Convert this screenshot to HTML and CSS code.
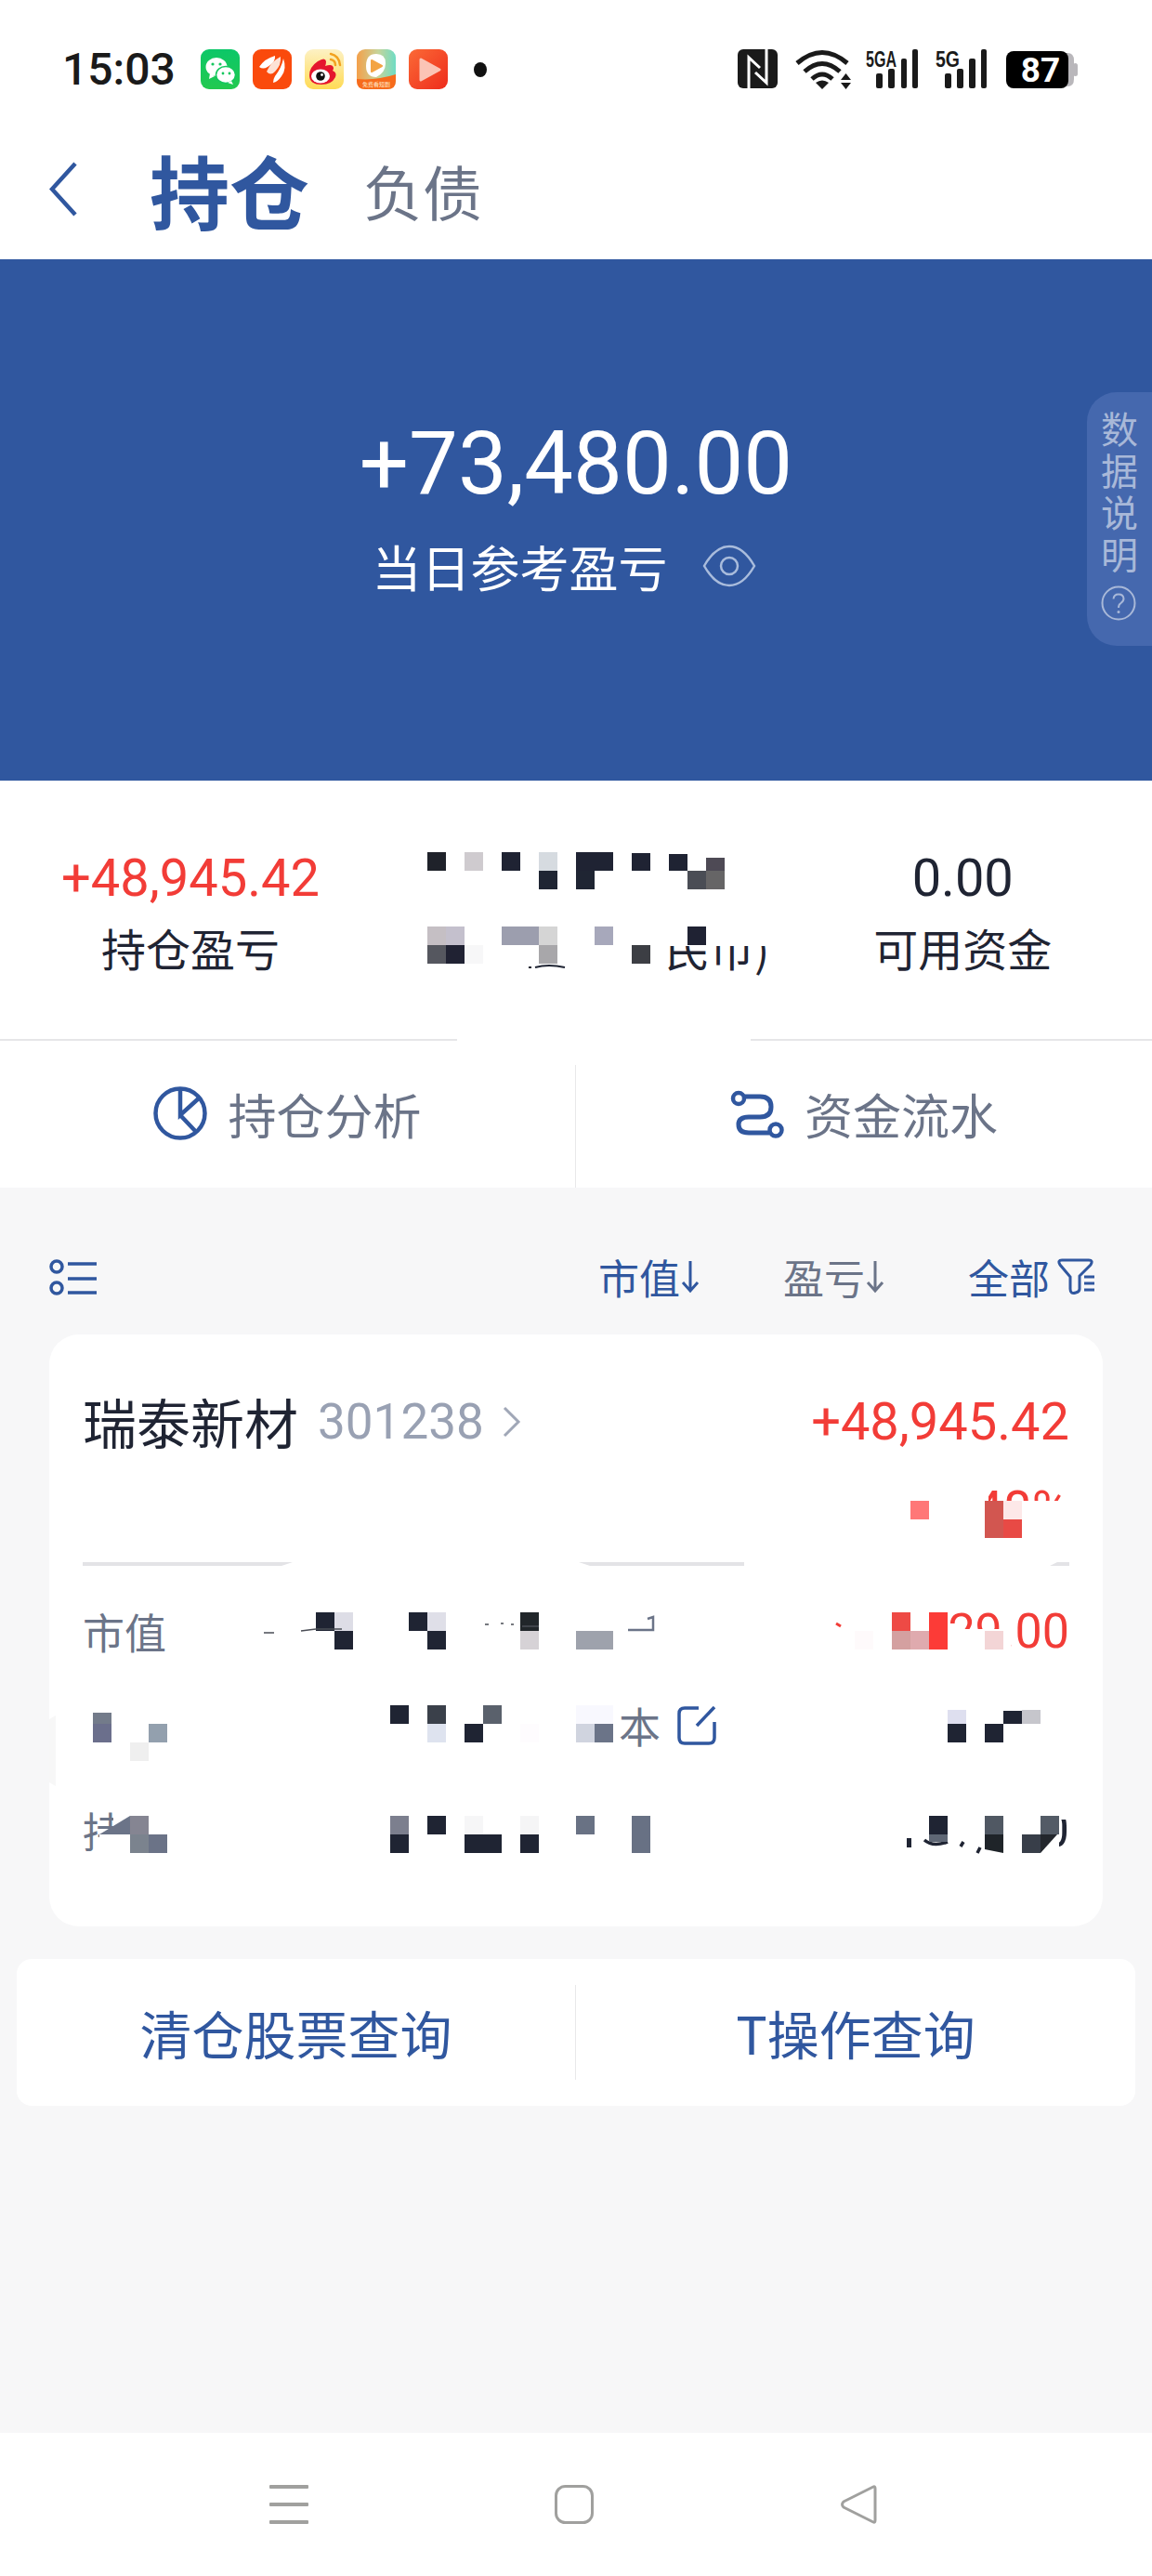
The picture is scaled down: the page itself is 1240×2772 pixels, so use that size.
FILE: index.html
```html
<!DOCTYPE html>
<html lang="zh-CN">
<head>
<meta charset="utf-8">
<title>持仓</title>
<link rel="stylesheet" href="styles.css">
</head>
<body>
<div class="page">
  <header class="status">
    <span class="time">15:03</span>
    <div class="apps">
      <svg class="app" viewBox="0 0 42 43"><defs><linearGradient id="wx" x1="0" y1="0" x2="0" y2="1"><stop offset="0" stop-color="#0cc768"/><stop offset="1" stop-color="#22c94f"/></linearGradient></defs><rect width="42" height="43" rx="9" fill="url(#wx)"/><ellipse cx="17" cy="19" rx="11.5" ry="10" fill="#fff"/><path d="M10 26l-1 6 6-3z" fill="#fff"/><ellipse cx="27" cy="27.5" rx="10.5" ry="9" fill="#fff" stroke="#14c75e" stroke-width="1.5"/><path d="M33 34l2 4-6-2z" fill="#fff"/><circle cx="13" cy="16" r="1.6" fill="#14c75e"/><circle cx="21" cy="16" r="1.6" fill="#14c75e"/><circle cx="24" cy="26" r="1.4" fill="#14c75e"/><circle cx="31" cy="26" r="1.4" fill="#14c75e"/></svg>
      <svg class="app" viewBox="0 0 42 43"><rect width="42" height="43" rx="9" fill="#fa4a0c"/><path d="M7 19Q13 10 24 7Q25 14 16 19Q11 22 7 19Z" fill="#fff"/><path d="M15 24Q20 13 30 8Q31 17 24 24Q19 29 15 24Z" fill="#fde2d6"/><path d="M24 29Q31 20 33 10Q37 21 31 29Q27 35 22 36Q22 32 24 29Z" fill="#fff"/></svg>
      <svg class="app" viewBox="0 0 42 43"><defs><linearGradient id="wb" x1="0" y1="0" x2="0" y2="1"><stop offset="0" stop-color="#fdf1c4"/><stop offset="1" stop-color="#ffdb55"/></linearGradient></defs><rect width="42" height="43" rx="9" fill="url(#wb)"/><path d="M28 5Q37 7 38 17M28 11Q33 12 33 17" fill="none" stroke="#f2a21f" stroke-width="2.5" stroke-linecap="round"/><path d="M5 28Q5 19 14 13Q22 8 23 13Q23 16 22 18Q30 15 31 20Q31 22 30 23Q35 25 33 30Q29 38 18 38Q5 38 5 28Z" fill="#e5162d"/><ellipse cx="17" cy="29" rx="10" ry="7.5" fill="#fff"/><circle cx="17" cy="29" r="4.8" fill="#111"/><circle cx="18.5" cy="27.5" r="1.4" fill="#fff"/></svg>
      <svg class="app" viewBox="0 0 42 43"><defs><linearGradient id="vd" x1="0" y1="0" x2="1" y2="0"><stop offset="0" stop-color="#f4a04a"/><stop offset="0.55" stop-color="#c6d49a"/><stop offset="1" stop-color="#6edcc4"/></linearGradient></defs><rect width="42" height="43" rx="9" fill="url(#vd)"/><path d="M0 32Q20 34 42 27V34Q42 43 33 43H9Q0 43 0 34Z" fill="#f76b1c"/><path d="M21 5Q31 5 31 15T21 30Q10 30 10 18Q10 5 21 5Z" fill="#fff"/><path d="M16 12L27 18L16 24Z" fill="#f3a443" stroke="#f3a443" stroke-width="2" stroke-linejoin="round"/><text class="tiny" x="21" y="40" text-anchor="middle">免费看短剧</text></svg>
      <svg class="app" viewBox="0 0 42 43"><defs><linearGradient id="pl" x1="0" y1="0" x2="1" y2="1"><stop offset="0" stop-color="#fb6a36"/><stop offset="1" stop-color="#ee2c1c"/></linearGradient></defs><rect width="42" height="43" rx="9" fill="url(#pl)"/><path d="M13 11L33 22L13 33Z" fill="#fbc4b6" stroke="#fbc4b6" stroke-width="3" stroke-linejoin="round"/></svg>
      <span class="dot"></span>
    </div>
    <div class="sys">
      <svg class="nfc" viewBox="0 0 43 42"><rect width="43" height="42" rx="6" fill="#1a1a1a"/><path d="M12 42V9L24 20M31 0V36L19 25" fill="none" stroke="#fff" stroke-width="3"/></svg>
      <svg class="wifi" viewBox="0 0 60 43"><path d="M2 15Q29 -8 56 15M10 24Q29 7 48 24M18 32Q29 22 40 32" fill="none" stroke="#1a1a1a" stroke-width="5"/><path d="M22 36Q29 31 36 36L29 43Z" fill="#1a1a1a"/><path d="M54.500 26L60 33H49ZM49 36H60L54.500 43Z" fill="#1a1a1a"/></svg>
      <svg class="sig5a" viewBox="0 -10 56 53"><text class="sigtxt" x="0" y="19" textLength="33" lengthAdjust="spacingAndGlyphs">5GA</text><rect x="11" y="26" width="7" height="16" rx="2"/><rect x="24" y="21" width="7" height="21" rx="2"/><rect x="38" y="10" width="6" height="32" rx="2"/><rect x="50" y="0" width="6" height="42" rx="2"/></svg>
      <svg class="sig5" viewBox="0 -10 55 53"><text class="sigtxt" x="0" y="19" textLength="26" lengthAdjust="spacingAndGlyphs">5G</text><rect x="10" y="26" width="7" height="16" rx="2"/><rect x="23" y="21" width="7" height="21" rx="2"/><rect x="36" y="10" width="7" height="32" rx="2"/><rect x="49" y="0" width="6" height="42" rx="2"/></svg>
      <svg class="batt" viewBox="0 -6 77 54"><path d="M60 2H66Q73 2 73 10V30Q73 38 66 38H60Z" fill="#b9b7bb"/><rect x="72" y="13" width="5" height="14" rx="2.500" fill="#b9b7bb"/><rect width="67" height="40" rx="8" fill="#000"/><text class="batxt" x="37" y="33" text-anchor="middle">87</text></svg>
    </div>
  </header>

  <nav class="topbar">
    <svg class="back" viewBox="0 0 31 59"><path d="M28 2L3 29.500L28 57" fill="none" stroke="#30579f" stroke-width="4.500"/></svg>
    <span class="title">持仓</span>
    <span class="title-sub">负债</span>
  </nav>

  <section class="hero">
    <div class="hero-amount">+73,480.00</div>
    <div class="hero-label">
      <span>当日参考盈亏</span>
      <svg class="eye" viewBox="0 0 58 46"><path d="M2 23Q14 2 29 2T56 23Q44 44 29 44T2 23Z" fill="none" stroke="#a9bcdc" stroke-width="2.500"/><circle cx="29" cy="23" r="9" fill="none" stroke="#a9bcdc" stroke-width="2.500"/></svg>
    </div>
    <aside class="side-tab">
      <span class="side-text">数据说明</span>
      <svg class="side-q" viewBox="0 0 38 38"><circle cx="19" cy="19" r="17.500" fill="none" stroke="#a8b8d8" stroke-width="2"/><path d="M13.500 14.500Q14 9.500 19 9.500T24.500 14Q24.500 17 21.500 19Q19 20.500 19 24" fill="none" stroke="#a8b8d8" stroke-width="2"/><circle cx="19" cy="28.500" r="1.500" fill="#a8b8d8"/></svg>
    </aside>
  </section>

  <section class="stats">
    <div class="stat">
      <div class="stat-val red">+48,945.42</div>
      <div class="stat-lab">持仓盈亏</div>
    </div>
    <div class="stat stat-mid">
      <div class="stat-val">&nbsp;</div>
      <div class="stat-lab">民币)</div>
    </div>
    <div class="stat">
      <div class="stat-val">0.00</div>
      <div class="stat-lab">可用资金</div>
    </div>
  </section>

  <section class="tabs">
    <div class="tab">
      <svg class="tab-ic" viewBox="0 0 58 58"><circle cx="29" cy="29" r="26.500" fill="none" stroke="#30579f" stroke-width="4.500"/><path d="M29 3V31L51 11M29 31L47 50" fill="none" stroke="#30579f" stroke-width="4.500"/></svg>
      <span>持仓分析</span>
    </div>
    <div class="tab tab-r">
      <svg class="tab-ic2" viewBox="0 0 58 54"><circle cx="9" cy="11" r="6" fill="none" stroke="#30579f" stroke-width="4.500"/><circle cx="49" cy="45" r="6.500" fill="none" stroke="#30579f" stroke-width="4.500"/><path d="M15 9H32Q44 9 44 20Q44 31 32 31H20Q9 31 9 39Q9 48 20 48H42" fill="none" stroke="#30579f" stroke-width="5"/></svg>
      <span>资金流水</span>
    </div>
  </section>

  <main class="main">
    <div class="toolbar">
      <svg class="list-ic" viewBox="0 0 51 40"><circle cx="8" cy="8" r="6" fill="none" stroke="#30579f" stroke-width="3.500"/><circle cx="8" cy="31" r="6" fill="none" stroke="#30579f" stroke-width="3.500"/><path d="M20 5H51M20 21H51M20 36H51" stroke="#30579f" stroke-width="3.500"/></svg>
      <div class="sorts">
        <span class="sort blue">市值<svg class="arrow" viewBox="0 0 20 36"><path d="M10 1V33M2 24L10 33L18 24" fill="none" stroke="currentColor" stroke-width="3"/></svg></span>
        <span class="sort">盈亏<svg class="arrow" viewBox="0 0 20 36"><path d="M10 1V33M2 24L10 33L18 24" fill="none" stroke="currentColor" stroke-width="3"/></svg></span>
        <span class="sort blue">全部<svg class="filter" viewBox="0 0 40 40"><path d="M5 2H34Q39 2 36 7L24 19V33Q24 36 20 37Q14 39 14 33V20L3 7Q0 2 5 2Z" fill="none" stroke="#30579f" stroke-width="3"/><path d="M29 20H40M29 27H40M29 34H40" stroke="#30579f" stroke-width="3"/></svg></span>
      </div>
    </div>

    <article class="card">
      <div class="card-head">
        <span class="stock-name">瑞泰新材</span>
        <span class="stock-code">301238</span>
        <svg class="chev" viewBox="0 0 20 34"><path d="M2 2L17 17L2 32" fill="none" stroke="#a0a7b7" stroke-width="3"/></svg>
        <span class="head-val red">+48,945.42</span>
      </div>
      <div class="pct-row red">48%</div>
      <div class="sep"></div>
      <div class="rows">
        <span class="k">市值</span><span class="m"></span><span class="v red">29.00</span>
        <span class="k"></span><span class="m"><span class="k k-end">本</span><svg class="edit" viewBox="0 0 42 42"><path d="M23 2H8Q2 2 2 8V34Q2 40 8 40H34Q40 40 40 34V17M21 21L40 1" fill="none" stroke="#30579f" stroke-width="3.500"/></svg></span><span class="v"></span>
        <span class="k k-last">持</span><span class="m k-last"></span><span class="v k-last">0</span>
      </div>
    </article>

    <div class="queries">
      <div class="query">清仓股票查询</div>
      <div class="query query-r">T操作查询</div>
    </div>
  </main>

  <footer class="navbar">
    <svg class="nav-menu" viewBox="0 0 42 42"><rect y="0" width="42" height="4" rx="1" fill="#a0a09e"/><rect y="19" width="42" height="4" rx="1" fill="#a0a09e"/><rect y="38" width="42" height="4" rx="1" fill="#a0a09e"/></svg>
    <svg class="nav-home" viewBox="0 0 42 42"><rect x="1.500" y="1.500" width="39" height="39" rx="10" fill="none" stroke="#a0a09e" stroke-width="3"/></svg>
    <svg class="nav-back" viewBox="0 0 40 42"><path d="M36 2Q38 1 38 4V38Q38 41 36 40L4 24Q1 21 4 18Z" fill="none" stroke="#a0a09e" stroke-width="3" stroke-linejoin="round"/></svg>
  </footer>

  <svg class="mosaic" viewBox="0 0 1240 2772">
    <g fill="#fff">
      <rect x="492" y="1117" width="316" height="4"/>
      <rect x="700" y="985" width="130" height="33"/>
      <polygon points="318,1680 620,1680 638,1686 300,1686"/>
      <polygon points="801,1680 1140,1680 1128,1686 801,1686"/>
      <rect x="960" y="1615" width="195" height="45"/>
      <rect x="1000" y="1590" width="64" height="26"/>
      <rect x="1000" y="1753" width="88" height="30"/>
      <rect x="1118" y="1945" width="22" height="50"/>
      <rect x="1118" y="1945" width="36" height="13"/>
      <rect x="107" y="1974" width="30" height="26"/>
      <polygon points="122,1940 140,1940 140,1954 122,1965"/>
    </g>
    <polygon points="53,1850 60,1846 60,1922 53,1918" fill="#f7f7f7"/>
    <path d="M107 1974L140 1954V1974Z" fill="#6b7488"/>

    <rect x="460" y="917" width="20" height="20" fill="#1f222a"/>
    <rect x="500" y="917" width="20" height="20" fill="#cfcbcf"/>
    <rect x="540" y="917" width="20" height="20" fill="#1f2333"/>
    <rect x="580" y="917" width="20" height="20" fill="#d6dbe0"/>
    <rect x="580" y="937" width="20" height="20" fill="#1f2533"/>
    <rect x="620" y="917" width="40" height="20" fill="#1f2333"/>
    <rect x="620" y="937" width="20" height="20" fill="#1f2533"/>
    <rect x="680" y="918" width="20" height="19" fill="#1f2333"/>
    <rect x="720" y="919" width="20" height="18" fill="#1f2333"/>
    <rect x="740" y="937" width="20" height="20" fill="#4a4d55"/>
    <rect x="760" y="923" width="20" height="14" fill="#4e4a55"/>
    <rect x="760" y="937" width="20" height="20" fill="#666566"/>

    <rect x="460" y="997" width="20" height="20" fill="#c5bfc4"/>
    <rect x="480" y="997" width="20" height="20" fill="#c4c0cd"/>
    <rect x="540" y="997" width="40" height="20" fill="#9c9eae"/>
    <rect x="580" y="997" width="20" height="20" fill="#d5d5d5"/>
    <rect x="460" y="1017" width="20" height="20" fill="#55575f"/>
    <rect x="480" y="1017" width="20" height="20" fill="#202233"/>
    <rect x="500" y="1017" width="20" height="20" fill="#f7f7f8"/>
    <rect x="580" y="1017" width="20" height="20" fill="#a8a7aa"/>
    <rect x="640" y="997" width="20" height="20" fill="#a7a8bb"/>
    <rect x="680" y="1017" width="20" height="20" fill="#3c3e44"/>
    <rect x="740" y="997" width="20" height="20" fill="#1f2233"/>
    <path d="M569 1041h3M576 1041Q590 1037 608 1041" fill="none" stroke="#1f2433" stroke-width="2"/>

    <rect x="980" y="1615" width="20" height="20" fill="#ff7777"/>
    <rect x="1060" y="1615" width="20" height="40" fill="#d25650"/>
    <rect x="1080" y="1615" width="20" height="20" fill="#fde8e8"/>
    <rect x="1080" y="1635" width="20" height="20" fill="#e84a45"/>

    <rect x="340" y="1735" width="20" height="20" fill="#1f2433"/>
    <rect x="360" y="1735" width="20" height="20" fill="#dddde6"/>
    <rect x="360" y="1755" width="20" height="20" fill="#1f2433"/>
    <rect x="440" y="1735" width="20" height="20" fill="#1f2433"/>
    <rect x="460" y="1735" width="20" height="20" fill="#dfdfe8"/>
    <rect x="460" y="1755" width="20" height="20" fill="#1f2433"/>
    <rect x="560" y="1735" width="20" height="20" fill="#21262a"/>
    <rect x="560" y="1755" width="20" height="20" fill="#d6d2d6"/>
    <path d="M284 1757H295M324 1755L340 1753M340 1753H368M522 1748h4M539 1747h3M550 1748h3M562 1750H580" fill="none" stroke="#4a4d55" stroke-width="1.500"/>
    <rect x="620" y="1755" width="40" height="20" fill="#9ea2ac"/>
    <path d="M676 1754H703V1740L697 1742" fill="none" stroke="#6b7488" stroke-width="2.500"/>
    <rect x="920" y="1755" width="20" height="20" fill="#fefafb"/>
    <path d="M900 1747l5 3" stroke="#f23c37" stroke-width="3"/>
    <rect x="960" y="1735" width="20" height="20" fill="#ee4a45"/>
    <rect x="960" y="1755" width="20" height="20" fill="#d4a0a0"/>
    <rect x="980" y="1755" width="20" height="20" fill="#dfaaae"/>
    <rect x="1000" y="1735" width="20" height="40" fill="#fc3b37"/>
    <rect x="1060" y="1755" width="20" height="20" fill="#f3d5d6"/>

    <rect x="100" y="1843" width="20" height="12" fill="#737b8a"/>
    <rect x="100" y="1855" width="20" height="20" fill="#6b6f8c"/>
    <rect x="160" y="1855" width="20" height="20" fill="#93a0ae"/>
    <rect x="140" y="1875" width="20" height="20" fill="#efefef"/>
    <rect x="420" y="1835" width="20" height="20" fill="#1f2433"/>
    <rect x="460" y="1835" width="20" height="20" fill="#3a404a"/>
    <rect x="460" y="1855" width="20" height="20" fill="#dee3ef"/>
    <rect x="520" y="1835" width="20" height="20" fill="#5a616c"/>
    <rect x="500" y="1855" width="20" height="20" fill="#1f2433"/>
    <rect x="560" y="1855" width="20" height="20" fill="#fefcfe"/>
    <rect x="620" y="1835" width="40" height="20" fill="#f8f8fe"/>
    <rect x="620" y="1855" width="20" height="20" fill="#d0d4df"/>
    <rect x="640" y="1855" width="20" height="20" fill="#6b7488"/>
    <rect x="1020" y="1840" width="20" height="15" fill="#dedfef"/>
    <rect x="1020" y="1855" width="20" height="20" fill="#1f2433"/>
    <rect x="1060" y="1855" width="20" height="20" fill="#1f2433"/>
    <rect x="1080" y="1841" width="20" height="14" fill="#1f2433"/>
    <rect x="1100" y="1840" width="20" height="15" fill="#c6c6cc"/>

    <rect x="140" y="1954" width="20" height="20" fill="#858592"/>
    <rect x="140" y="1974" width="20" height="20" fill="#7b838e"/>
    <rect x="160" y="1974" width="20" height="20" fill="#6b7387"/>
    <rect x="420" y="1954" width="20" height="20" fill="#7c7f8e"/>
    <rect x="420" y="1974" width="20" height="20" fill="#1f2433"/>
    <rect x="460" y="1954" width="20" height="20" fill="#1f2433"/>
    <rect x="500" y="1954" width="20" height="20" fill="#f6f6f7"/>
    <rect x="500" y="1974" width="40" height="20" fill="#1f2433"/>
    <rect x="560" y="1954" width="20" height="20" fill="#f5f5f6"/>
    <rect x="560" y="1974" width="20" height="20" fill="#1f2433"/>
    <rect x="620" y="1954" width="20" height="20" fill="#697284"/>
    <rect x="680" y="1954" width="20" height="40" fill="#687184"/>
    <rect x="976" y="1978" width="5" height="10" fill="#1f2433"/>
    <path d="M995 1980Q1004 1988 1020 1982" fill="none" stroke="#1f2433" stroke-width="3.500"/>
    <rect x="1000" y="1954" width="20" height="20" fill="#1f2433"/>
    <rect x="1000" y="1974" width="20" height="8" fill="#5f6775"/>
    <path d="M1034 1987l3-5M1052 1994l3-6" stroke="#1f2433" stroke-width="3.500"/>
    <rect x="1060" y="1954" width="20" height="20" fill="#505863"/>
    <path d="M1060 1974H1080V1994L1060 1990Z" fill="#1f2429"/>
    <rect x="1100" y="1974" width="20" height="20" fill="#383e49"/>
    <rect x="1120" y="1954" width="20" height="20" fill="#535b66"/>
    <path d="M1120 1974H1138L1120 1994Z" fill="#23272d"/>
  </svg>
</div>
</body>
</html>
```

FILE: styles.css
```css
* { box-sizing: border-box; }
html, body { margin: 0; padding: 0; }
body {
  background: #fff;
  font-family: Roboto, "Noto Sans CJK SC", sans-serif;
  color: #1f2433;
}
.page {
  position: relative;
  width: 1240px;
  height: 2772px;
  display: flex;
  flex-direction: column;
  overflow: hidden;
}
.red { color: #f23c37; }
.blue { color: #30579f; }

/* status bar */
.status {
  height: 140px;
  padding: 53px 0 0 67px;
  display: flex;
  align-items: flex-start;
}
.time {
  width: 149px;
  font-size: 48px;
  font-weight: 500;
  line-height: 43px;
  color: #1a1a1a;
}
.apps { display: flex; align-items: center; gap: 14px; height: 43px; }
.app { width: 42px; height: 43px; display: block; }
.tiny { font-family: "Noto Sans CJK SC", sans-serif; font-size: 6px; fill: #ffe9c9; }
.dot {
  width: 14px;
  height: 16px;
  margin-left: 14px;
  border-radius: 50%;
  background: #111;
}
.sys {
  position: relative;
  margin-left: 270px;
  display: flex;
  align-items: flex-start;
  height: 43px;
}
.nfc { width: 43px; height: 42px; margin-right: 19px; display: block; }
.wifi { width: 60px; height: 43px; margin-right: 16px; display: block; }
.sig5a { width: 56px; height: 53px; margin: -10px 19px 0 0; display: block; fill: #1a1a1a; }
.sig5 { width: 55px; height: 53px; margin: -10px 21px 0 0; display: block; fill: #1a1a1a; }
.sigtxt { font-family: "Liberation Sans", sans-serif; font-size: 23px; font-weight: 700; fill: #1a1a1a; }
.batt { width: 77px; height: 54px; margin-top: -4px; display: block; }
.batxt { font-family: Roboto, sans-serif; font-size: 37px; font-weight: 700; fill: #fff; }

/* top bar */
.topbar {
  height: 139px;
  padding: 0 0 12px 53px;
  display: flex;
  align-items: center;
}
.back { width: 31px; height: 59px; margin-right: 77px; display: block; }
.title {
  font-family: "Noto Sans CJK SC", sans-serif;
  font-size: 86px;
  font-weight: 700;
  line-height: 96px;
  color: #30579f;
}
.title-sub {
  margin-left: 58px;
  font-family: "Noto Sans CJK SC", sans-serif;
  font-size: 64px;
  line-height: 72px;
  color: #6b7488;
}

/* hero */
.hero {
  position: relative;
  height: 561px;
  padding-top: 170px;
  background: #30579f;
  color: #fff;
  text-align: center;
}
.hero-amount { font-size: 94px; line-height: 100px; }
.hero-label {
  margin-top: 28px;
  padding-right: 26px;
  display: flex;
  justify-content: center;
  align-items: center;
  gap: 37px;
  font-family: "Noto Sans CJK SC", sans-serif;
  font-size: 53px;
  line-height: 64px;
}
.eye { width: 58px; height: 46px; display: block; }
.side-tab {
  position: absolute;
  right: 0;
  top: 143px;
  width: 70px;
  height: 273px;
  padding: 20px 0 0 15px;
  background: #4568ae;
  border-radius: 32px 0 0 32px;
}
.side-text {
  display: block;
  width: 40px;
  writing-mode: vertical-rl;
  font-family: "Noto Sans CJK SC", sans-serif;
  font-size: 40px;
  line-height: 40px;
  letter-spacing: 5px;
  color: #a8b8d8;
}
.side-q { width: 38px; height: 38px; margin-top: 8px; display: block; }

/* stats */
.stats {
  height: 280px;
  padding-top: 75px;
  display: grid;
  grid-template-columns: 410px 1fr 416px;
  border-bottom: 2px solid #e6e6e8;
  text-align: center;
}
.stat-val { font-size: 56px; line-height: 60px; }
.stat-lab {
  margin-top: 14px;
  font-family: "Noto Sans CJK SC", sans-serif;
  font-size: 48px;
  line-height: 60px;
  color: #1f2433;
}
.stat-mid { padding-left: 306px; text-align: left; white-space: nowrap; }

/* tabs */
.tabs {
  height: 158px;
  padding-top: 26px;
  display: grid;
  grid-template-columns: 619px 1fr;
}
.tab {
  height: 132px;
  padding-bottom: 28px;
  display: flex;
  justify-content: center;
  align-items: center;
  gap: 22px;
  font-family: "Noto Sans CJK SC", sans-serif;
  font-size: 52px;
  color: #6b7488;
}
.tab-r { border-left: 1px solid #e8e8ea; }
.tab-ic { width: 58px; height: 58px; display: block; }
.tab-ic2 { width: 58px; height: 54px; display: block; }

/* main */
.main {
  flex: 1;
  padding-top: 77px;
  background: #f7f7f8;
}
.toolbar {
  height: 40px;
  margin-bottom: 41px;
  padding: 0 62px 0 53px;
  display: flex;
  justify-content: space-between;
  align-items: center;
}
.list-ic { width: 51px; height: 40px; display: block; }
.sorts { display: flex; gap: 90px; margin-top: -2px; }
.sort {
  display: flex;
  align-items: center;
  gap: 1px;
  font-family: "Noto Sans CJK SC", sans-serif;
  font-size: 44px;
  line-height: 44px;
  color: #6b7488;
}
.sort.blue { color: #30579f; }
.arrow { width: 20px; height: 36px; display: block; }
.filter { width: 40px; height: 40px; margin-left: 7px; display: block; }

/* card */
.card {
  height: 637px;
  margin: 0 53px;
  padding: 62px 36px 0;
  background: #fff;
  border-radius: 32px;
}
.card-head { height: 64px; display: flex; align-items: center; }
.stock-name {
  margin-top: -2px;
  font-family: "Noto Sans CJK SC", sans-serif;
  font-size: 58px;
  line-height: 64px;
  color: #1f2433;
}
.stock-code { margin-left: 21px; font-size: 53px; color: #99a1b3; }
.chev { width: 20px; height: 34px; margin-left: 20px; display: block; }
.head-val { margin-left: auto; font-size: 56px; }
.pct-row {
  height: 60px;
  margin-top: 33px;
  text-align: right;
  font-size: 55px;
  line-height: 60px;
}
.sep { height: 4px; margin-top: 26px; background: #e3e3e6; }
.rows {
  margin-top: 41px;
  display: grid;
  grid-template-columns: 531px 1fr auto;
  grid-auto-rows: 60px;
  row-gap: 41px;
  align-items: center;
}
.k {
  font-family: "Noto Sans CJK SC", sans-serif;
  font-size: 45px;
  line-height: 60px;
  color: #6b7488;
}
.m { display: flex; align-items: center; padding-left: 46px; height: 60px; }
.k-end { width: 45px; }
.edit { width: 42px; height: 42px; margin-left: 18px; display: block; }
.v { font-size: 52px; line-height: 60px; text-align: right; }
.k-last { position: relative; top: 12px; }

/* queries */
.queries {
  height: 158px;
  margin: 35px 18px 0;
  display: grid;
  grid-template-columns: 601px 1fr;
  align-items: center;
  background: #fff;
  border-radius: 16px;
}
.query {
  height: 102px;
  padding-bottom: 2px;
  display: flex;
  justify-content: center;
  align-items: center;
  font-family: "Noto Sans CJK SC", sans-serif;
  font-size: 56px;
  color: #30579f;
}
.query-r { border-left: 1px solid #e8e8ea; }

/* system nav */
.navbar {
  position: relative;
  height: 154px;
  padding: 56px 296px 0 290px;
  display: flex;
  justify-content: space-between;
  align-items: flex-start;
  background: #fff;
}
.nav-menu, .nav-home { width: 42px; height: 42px; display: block; }
.nav-back { width: 40px; height: 42px; display: block; }

.mosaic {
  position: absolute;
  left: 0;
  top: 0;
  width: 1240px;
  height: 2772px;
  pointer-events: none;
}
```
